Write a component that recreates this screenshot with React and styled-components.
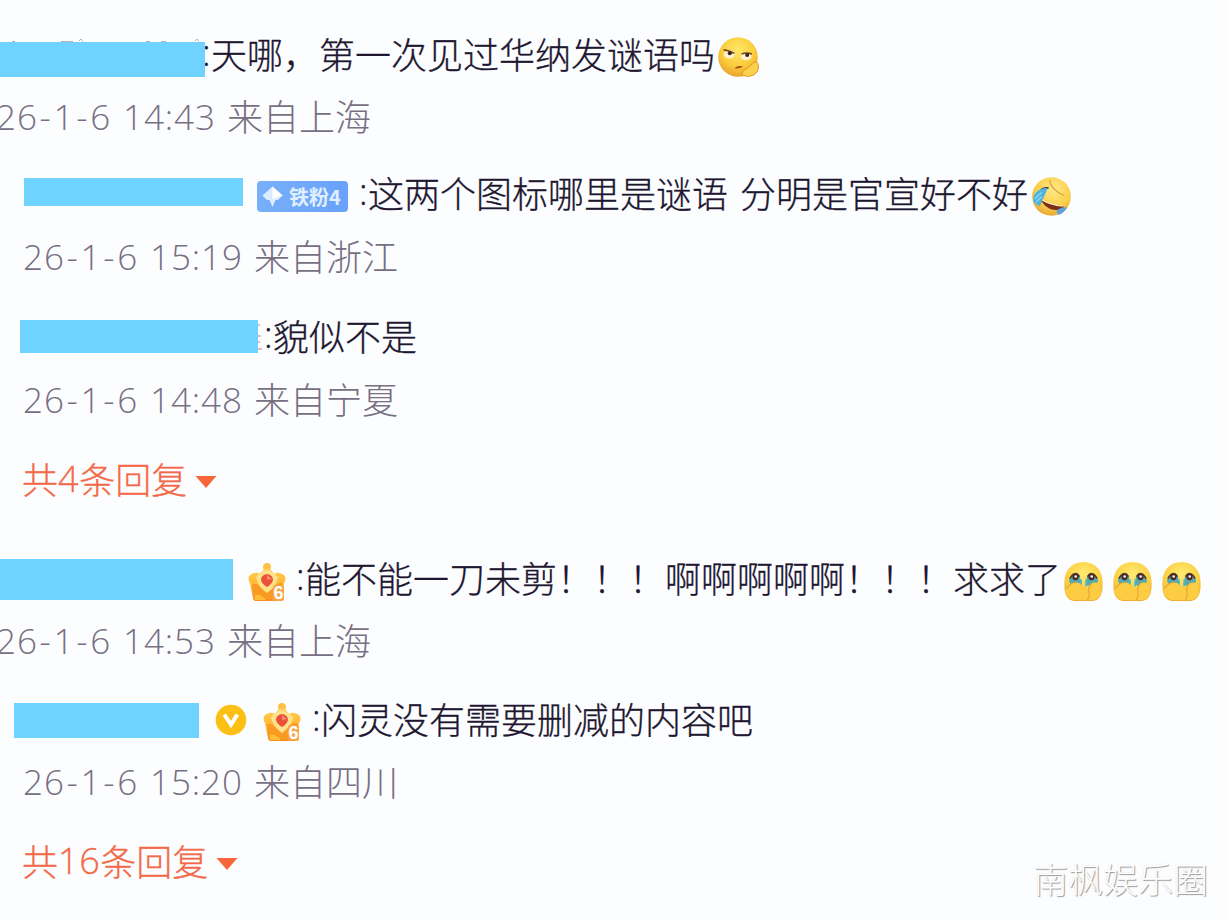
import React from 'react';
import styled, { createGlobalStyle } from 'styled-components';

const GlobalStyle = createGlobalStyle`
    body{
        margin:0;
        background:#fcfdff;
        overflow:hidden;
    }
`

const EyeRollEmoji = () => (
    <Emoji viewBox="0 0 42 42" $width={43} $height={43}>
        <defs>
            <radialGradient id="rollFace" cx="50%" cy="32%" r="68%">
                <stop offset="0" stopColor="#ffe868" />
                <stop offset="0.6" stopColor="#fbcd3c" />
                <stop offset="1" stopColor="#e9a32a" />
            </radialGradient>
        </defs>
        <circle cx="20.5" cy="20.5" r="19.3" fill="url(#rollFace)" />
        <ellipse cx="12" cy="18" rx="5.4" ry="4" fill="#fff0cf" />
        <ellipse cx="28.5" cy="20" rx="5.2" ry="3.8" fill="#fff0cf" />
        <path d="M6.5 13.5Q12 14 17 17" stroke="#6b4520" strokeWidth="1.6" fill="none" />
        <path d="M24 17.5Q29 15.8 34 17.5" stroke="#6b4520" strokeWidth="1.6" fill="none" />
        <circle cx="12.5" cy="16.8" r="2" fill="#37251f" />
        <circle cx="29.5" cy="18.6" r="2" fill="#37251f" />
        <path d="M17 31.5Q20 28.5 25.5 29.5Q22 32.5 17 31.5Z" fill="#a34d18" />
        <path d="M25 38.5Q24 34 29 32L36 26Q40 24 40.5 29Q41 35 36 38Q31 41 25 38.5Z" fill="#fcd04a" stroke="#dc952b" strokeWidth="0.9" />
    </Emoji>
);

const RoflEmoji = () => (
    <Emoji viewBox="0 0 42 42" $width={41} $height={41}>
        <defs>
            <radialGradient id="roflFace" cx="55%" cy="32%" r="68%">
                <stop offset="0" stopColor="#ffe88a" />
                <stop offset="0.65" stopColor="#fad04a" />
                <stop offset="1" stopColor="#eba738" />
            </radialGradient>
        </defs>
        <circle cx="21" cy="21" r="19.8" fill="url(#roflFace)" />
        <path d="M19 4Q20 14 34 20" stroke="#dca23c" strokeWidth="1.2" fill="none" />
        <path d="M10 14.5Q13 11 18 12.5" stroke="#3c3327" strokeWidth="1.8" fill="none" />
        <path d="M17 12.5Q14 20 9 31L2.5 27Q1 18 8 14.5Q12 12 17 12.5Z" fill="#4fb4df" />
        <path d="M4 23L11 17M5 27L11 21" stroke="#8fd8ef" strokeWidth="1.3" />
        <path d="M10 24Q18 30 34 31Q31 36 23 34.5Q14 33 10 24Z" fill="#7b2f18" />
        <path d="M11 24.5Q20 30 33 31" stroke="#fff0d8" strokeWidth="1.1" fill="none" />
        <path d="M26 36Q29 32 37 32Q34 38 28 40Z" fill="#5e9fdc" />
    </Emoji>
);

const TearsEmoji = () => (
    <Emoji viewBox="0 0 42 42" $width={41} $height={41}>
        <defs>
            <radialGradient id="tearsFace" cx="50%" cy="32%" r="68%">
                <stop offset="0" stopColor="#ffea72" />
                <stop offset="0.65" stopColor="#fbd144" />
                <stop offset="1" stopColor="#efae30" />
            </radialGradient>
        </defs>
        <path d="M21 1C33 1 40.5 10 40.5 21C41 30 40 41 29 41H13C2 41 1 30 1.5 21C1.5 10 9 1 21 1Z" fill="url(#tearsFace)" />
        <path d="M6 20Q9 12 14 12Q18 13 19 25H8ZM23 25Q24 13 28 12Q33 12 36 20L34 25Z" fill="#57a9ac" />
        <path d="M7 18Q12 9 17 16M25 16Q30 9 35 18" stroke="#54351e" strokeWidth="1.6" fill="none" />
        <circle cx="12.8" cy="16.5" r="3.2" fill="#4b2727" />
        <circle cx="29.2" cy="16.5" r="3.2" fill="#4b2727" />
        <circle cx="13" cy="15.8" r="1.3" fill="#fff" />
        <circle cx="29.4" cy="15.8" r="1.3" fill="#fff" />
        <path d="M3 29Q6 22 13 22Q20 22 25 29L29 23Q35 20 38 26Q42 36 32 40H10Q0 36 3 29Z" fill="#fccc43" />
        <path d="M25 40Q28 35 26 28L29 23M4 28Q7 22 14 22" stroke="#e7a330" strokeWidth="1.1" fill="none" />
        <path d="M18.5 19V24M23.7 19V26" stroke="#4fb9c4" strokeWidth="1.6" />
    </Emoji>
);

const Crown = () => (
    <CrownBox>
        <svg width="40" height="40" viewBox="0 0 40 40">
            <defs>
                <linearGradient id="crownGold" x1="0" y1="0" x2="0" y2="1">
                    <stop offset="0" stopColor="#ffd057" />
                    <stop offset="0.55" stopColor="#ffb62d" />
                    <stop offset="1" stopColor="#f68c21" />
                </linearGradient>
            </defs>
            <circle cx="20" cy="5" r="4" fill="#ffc247" />
            <path d="M20 6Q25 8 27 12Q31 9 37 13Q40 16 37 21L34 36Q34 39 30 39H9Q6 39 6 36L3 21Q0 16 3 13Q9 9 13 12Q15 8 20 6Z" fill="url(#crownGold)" />
            <path d="M5 23Q10 18 20 32Q30 18 36 22L34 37H7Z" fill="#f99b22" />
            <path d="M9 15Q10 24 20 31Q30 24 31 15Q25 9 20 8Q14 9 9 15Z" fill="#ffe18a" />
            <path d="M20 12Q26 13 26 18Q25 22 20 25Q15 22 14 18Q14 13 20 12Z" fill="#e95138" />
            <path d="M20 13L25 17L20 18Z" fill="#ff8872" />
            <path d="M8 33Q14 32 19 38H8Z" fill="#ffbd38" />
        </svg>
        <CrownLevel>6</CrownLevel>
    </CrownBox>
);

const Verified = () => (
    <VerifiedIcon viewBox="0 0 32 32">
        <circle cx="16" cy="16" r="15.3" fill="#fbc013" />
        <path d="M9.2 10.5L16 20.5L22.3 10.5" fill="none" stroke="#fff" strokeWidth="4" />
    </VerifiedIcon>
);

const FanBadge = () => (
    <Badge>
        <svg width="21" height="22" viewBox="0 0 21 22">
            <path d="M10.5 0.5L20.5 9.5L16 14H13.5L10.5 21L7.5 14H5L0.5 9.5Z" fill="#dcecff" />
            <path d="M10.5 0.5L20.5 9.5L10.5 13Z" fill="#fff" />
        </svg>
        <span>铁粉4</span>
    </Badge>
);

const Replies = ({ count, top }) => (
    <MoreRow $top={top}>
        共<Digits>{count}</Digits>条回复
        <Arrow viewBox="0 0 22 12">
            <path d="M0.5 0H21.5L11 12Z" fill="#f7673a" />
        </Arrow>
    </MoreRow>
);

const Meta = ({ date = ['26', '1', '6'], time, from, top, left = 23 }) => (
    <MetaRow $top={top} $left={left}>
        <time>
            {date[0]}<Dash>-</Dash>{date[1]}<Dash>-</Dash>{date[2]} {time}
        </time>
        来自{from}
    </MetaRow>
);

const App = () => (
    <Page>
        <GlobalStyle />
        <Row $top={33} $left={0}>
            <NameBar $width={205} $height={35} $shift={5}>
                <NameTops viewBox="0 0 205 3">
                    <path d="M12 2.5H15M61 2.5H73M79 2L81 0L83 2.5M146 2.5H150M161 2.5H166M195 2L197 0L199 2.5" stroke="#b9aebc" fill="none" />
                </NameTops>
            </NameBar>
            <Text $gap={-3} $lift={8}><Colon>:</Colon>天哪，第一次见过华纳发谜语吗</Text>
            <Shift $x={2} $y={0}><EyeRollEmoji /></Shift>
        </Row>
        <Meta time="14:43" from="上海" top={13} left={-4} />

        <Row $top={28} $left={24}>
            <NameBar $width={219} $height={28} $shift={-4} />
            <FanBadge />
            <Text $gap={11}><Colon>:</Colon>这两个图标哪里是谜语<Space />分明是官宣好不好</Text>
            <Shift $x={3} $y={4}><RoflEmoji /></Shift>
        </Row>
        <Meta time="15:19" from="浙江" top={16} />

        <Row $top={31} $left={20}>
            <NameBar $width={238} $height={33} $shift={-1} />
            <NameEdge viewBox="0 0 5 28">
                <path d="M0 2H2M0 13H3M0 19H2M0 26H4" stroke="#e0a0ab" strokeWidth="1.5" />
            </NameEdge>
            <Text $gap={1}><Colon>:</Colon>貌似不是</Text>
        </Row>
        <Meta time="14:48" from="宁夏" top={16} />
        <Replies count="4" top={31} />

        <Row $top={51} $left={0}>
            <NameBar $width={233} $height={41} />
            <Shift $x={14} $y={5}><Crown /></Shift>
            <Text $gap={9}><Colon>:</Colon>能不能一刀未剪！！！啊啊啊啊啊！！！求求了</Text>
            <Tears>
                <TearsEmoji />
                <TearsEmoji />
                <TearsEmoji />
            </Tears>
        </Row>
        <Meta time="14:53" from="上海" top={15} left={-4} />

        <Row $top={30} $left={14}>
            <NameBar $width={185} $height={35} />
            <Verified />
            <Shift $x={15} $y={4}><Crown /></Shift>
            <Text $gap={10}><Colon>:</Colon>闪灵没有需要删减的内容吧</Text>
        </Row>
        <Meta time="15:20" from="四川" top={15} />
        <Replies count="16" top={31} />

        <Watermark>南枫娱乐圈</Watermark>
    </Page>
);

export default App;

const Page = styled.div`
    position:relative;
    display:flex;
    flex-direction:column;
    width:1226px;
    height:920px;
    overflow:hidden;
    background:#fcfdff;
    font-family:"Noto Sans CJK SC", sans-serif;
    font-weight:300;
    font-size:36px;
    line-height:48px;
    white-space:nowrap;
`

const Row = styled.div`
    display:flex;
    align-items:center;
    flex:none;
    box-sizing:border-box;
    height:48px;
    margin-top:${({$top})=>$top}px;
    margin-left:${({$left})=>$left}px;
    color:#20162f;
`

const MetaRow = styled(Row)`
    padding-bottom:6px;
    color:#786f83;
    time{
        width:231px;
        padding-top:4px;
        font-family:"Open Sans", sans-serif;
        font-size:35px;
        letter-spacing:0.9px;
        word-spacing:2px;
    }
`

const Dash = styled.span`
    padding:0 1.8px;
`

const MoreRow = styled(Row)`
    margin-left:22px;
    padding-bottom:5px;
    color:#f26a48;
    -webkit-text-stroke:0.3px #f26a48;
`

const Digits = styled.span`
    padding-top:2px;
    font-family:"Open Sans", sans-serif;
    letter-spacing:0.6px;
`

const Arrow = styled.svg`
    width:22px;
    height:12px;
    margin:9px 0 0 8px;
`

const NameBar = styled.div`
    position:relative;
    flex:none;
    width:${({$width})=>$width}px;
    height:${({$height})=>$height}px;
    margin-top:${({$shift = 0})=>$shift}px;
    background:#70d2ff;
`

const NameTops = styled.svg`
    position:absolute;
    left:0;
    bottom:100%;
    width:205px;
    height:3px;
`

const NameEdge = styled.svg`
    width:5px;
    height:28px;
`

const Text = styled.div`
    display:flex;
    flex:none;
    margin-left:${({$gap})=>$gap}px;
    padding-bottom:${({$lift = 5})=>$lift}px;
    -webkit-text-stroke:0.3px #20162f;
`

const Colon = styled.span`
    width:9px;
    font-family:"Open Sans", sans-serif;
`

const Space = styled.span`
    width:12px;
`

const Shift = styled.div`
    display:flex;
    margin:${({$y})=>$y}px 0 0 ${({$x})=>$x}px;
`

const Emoji = styled.svg`
    flex:none;
    width:${({$width})=>$width}px;
    height:${({$height})=>$height}px;
`

const Tears = styled.div`
    display:flex;
    gap:8px;
    margin-left:2px;
    padding-top:4px;
`

const Badge = styled.div`
    display:flex;
    align-items:center;
    box-sizing:border-box;
    width:91px;
    height:31px;
    margin:5px 0 0 14px;
    padding-left:5px;
    gap:6px;
    border-radius:4px;
    background:linear-gradient(100deg, #79b0fa, #68a1fb);
    span{
        color:#e0efff;
        font-size:20px;
        font-weight:700;
        line-height:29px;
    }
`

const CrownBox = styled.div`
    position:relative;
    width:40px;
    height:40px;
    svg{
        display:block;
    }
`

const CrownLevel = styled.span`
    position:absolute;
    right:3px;
    bottom:1px;
    width:11px;
    height:16px;
    border-radius:2px;
    background:#f8a54a;
    color:#fff;
    font-family:"Liberation Sans", sans-serif;
    font-size:18px;
    font-weight:700;
    line-height:17px;
    text-align:center;
`

const VerifiedIcon = styled.svg`
    flex:none;
    width:32px;
    height:32px;
    margin-left:16px;
`

const Watermark = styled.div`
    position:absolute;
    right:18px;
    bottom:18px;
    color:#fff;
    font-size:35px;
    text-shadow:1px 1px 1px #999, 0 0 1px #ddd;
`
